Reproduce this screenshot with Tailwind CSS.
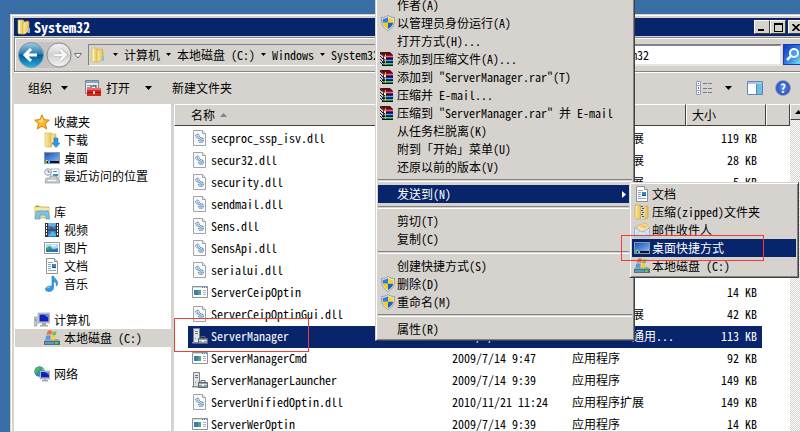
<!DOCTYPE html>
<html lang="zh-CN">
<head>
    <meta charset="UTF-8">
    <meta name="viewport" content="width=device-width, initial-scale=1.0">
    <title>System32</title>
    <script src="https://cdn.jsdelivr.net/npm/@tailwindcss/browser@4"></script>
</head>
<body class="relative flex h-screen overflow-hidden bg-[#396da5] pt-[14px] pl-[10px] font-['Noto_Sans_Mono_CJK_SC','Noto_Sans_CJK_SC','DejaVu_Sans_Mono',monospace] text-[12px] leading-[18px] text-black">

    <!-- Icons -->
    <svg class="absolute size-0">
        <defs>
            <linearGradient id="gFolder" x1="0" x2="1"><stop offset="0" stop-color="#f9ecaa"/><stop offset="1" stop-color="#e3bd50"/></linearGradient>
            <linearGradient id="gBack" x1="0" x2="0" y1="0" y2="1"><stop offset="0" stop-color="#a9c9dc"/><stop offset=".45" stop-color="#2c7fb4"/><stop offset=".5" stop-color="#07578f"/><stop offset="1" stop-color="#1fb4e8"/></linearGradient>
            <linearGradient id="gFwd" x1="0" x2="0" y1="0" y2="1"><stop offset="0" stop-color="#f4f4f4"/><stop offset=".5" stop-color="#d2d2d2"/><stop offset="1" stop-color="#f2f2f2"/></linearGradient>
            <linearGradient id="gScreen" x1="0" x2="1" y1="0" y2="1"><stop offset="0" stop-color="#1c4fb5"/><stop offset="1" stop-color="#7fb4f2"/></linearGradient>
            <linearGradient id="gSearch" x1="0" x2="1" y1="0" y2="1"><stop offset="0" stop-color="#1436c4"/><stop offset=".5" stop-color="#2a7be0"/><stop offset="1" stop-color="#7ff0ff"/></linearGradient>
        </defs>
        <symbol id="folder" viewBox="0 0 16 16">
            <path d="M2 1h5l1 1v13H3l-1-1z" fill="url(#gFolder)" stroke="#d9b750" stroke-width=".6"/>
            <path d="M8 3l4-1 1 1v9l-4 3H7V5z" fill="url(#gFolder)" stroke="#cfa63c" stroke-width=".6"/>
            <path d="M12 9h2v5h-2z" fill="#7cc2e8"/><path d="M3 2h1v12H3z" fill="#fff8cf"/>
        </symbol>
        <symbol id="star" viewBox="0 0 16 16">
            <path d="M8 .8l2.1 4.8 5.2.6-3.9 3.4 1.2 5.3L8 12.2l-4.7 2.7 1.2-5.3L.7 6.2l5.2-.6z" fill="#fdb92c" stroke="#dd7a12" stroke-width="1"/>
            <path d="M8 3l1.2 3.6L8 9 3.5 7l3.2-.6z" fill="#ffe48a"/>
        </symbol>
        <symbol id="downloads" viewBox="0 0 16 16">
            <path d="M1 1h7v14H2l-1-1z" fill="url(#gFolder)" stroke="#d9b750" stroke-width=".6"/>
            <path d="M7 2h5v10H7z" fill="url(#gFolder)" stroke="#d9b750" stroke-width=".6"/>
            <path d="M10 6h4v5h2l-4 4.5L8 11h2z" fill="#2f97e0" stroke="#1b6fb3" stroke-width=".5"/>
        </symbol>
        <symbol id="desktop" viewBox="0 0 16 16">
            <path d="M0 2h16v12H0z" fill="#8c98a8"/><path d="M1 3h14v8H1z" fill="url(#gScreen)"/>
            <path d="M1 11h14v2H1z" fill="#10131c"/><path d="M2 10h2v1H2z" fill="#f2cf2c"/><path d="M4 11h2v2H4z" fill="#55c5f0"/><path d="M1 11h2v2H1z" fill="#4bb54b"/>
        </symbol>
        <symbol id="recent" viewBox="0 0 16 16">
            <path d="M7 1h8v9H7z" fill="#fff" stroke="#9aa3ab" stroke-width=".8"/><path d="M9 3h4v1H9zM9 6h5v2H9z" fill="#3f8bd0"/>
            <circle cx="4" cy="4" r="3.3" fill="#eef1f4" stroke="#98a0a8"/><path d="M4 2v2h2" fill="none" stroke="#4c5a68" stroke-width=".8"/>
            <path d="M2 10h4v-2h7v3h2l1 4H1z" fill="#c5cbd0" stroke="#878f96" stroke-width=".6"/><path d="M4 12h8v1H4z" fill="#fff"/>
        </symbol>
        <symbol id="library" viewBox="0 0 16 16">
            <path d="M1 2h5l1 1h8v11H1z" fill="#f3dc86" stroke="#cfae52" stroke-width=".8"/><path d="M2 2h3v1H2z" fill="#58b858"/>
            <path d="M1 5h14" stroke="#fff6c8"/><path d="M3 7h11l2 8h-4v-4H6v4H1z" fill="#7cc3ee" stroke="#4392c6" stroke-width=".6"/>
        </symbol>
        <symbol id="video" viewBox="0 0 16 16">
            <path d="M1 1h14v14H1z" fill="#30343a"/><path d="M4 1h8v14H4z" fill="#2f7fc4"/>
            <path d="M4 1h8v2L8 6 4 3zM8 9l4 3v2H4z" fill="#53b4ef"/><path d="M5 5l3-1 2 3-3 1zM5 10l2 1-2 1z" fill="#a33f44"/><path d="M4 7.5h8v1H4z" fill="#192d48"/>
            <path d="M2 2h1v2H2zM2 5h1v2H2zM2 8h1v2H2zM2 11h1v2H2zM13 2h1v2h-1zM13 5h1v2h-1zM13 8h1v2h-1zM13 11h1v2h-1z" fill="#fff"/>
        </symbol>
        <symbol id="picture" viewBox="0 0 16 16">
            <path d="M.5 2.5h15v11H.5z" fill="#fff" stroke="#8f969c"/><path d="M2 4h12v8H2z" fill="#a7dcf7"/>
            <path d="M2 8l4-2 3 3 5-1v4H2z" fill="#3f9c6a"/><path d="M2 10l12-1v3H2z" fill="#2476b8"/><path d="M7 5h5v1H7z" fill="#fff"/>
        </symbol>
        <symbol id="document" viewBox="0 0 16 16">
            <path d="M2.5.5h8l3 3v12h-11z" fill="#fff" stroke="#8b929a"/><path d="M10.5.5v3h3" fill="#dfe6ec" stroke="#8b929a"/>
            <path d="M4 4h5v1H4zM4 6h3v1H4zM4 8h3v1H4zM4 10h3v1H4zM4 12h8v1H4z" fill="#8aa6c0"/><path d="M8 6h4v4H8z" fill="#2f8bc9"/><path d="M8 9h4v1H8z" fill="#1e4e86"/>
        </symbol>
        <symbol id="music" viewBox="0 0 16 16">
            <path d="M8 0h1.5c.5 3 5 3.5 4 8.5-.5 1-1 1.5-1.5 1.5 1-3-.5-4-2.500-4.5V12c0 2-2 3.5-4.500 3.5S1.500 14.300 1.500 13 3.500 10 6 10c1 0 1.500.2 2 .4z" fill="#2f9de6" stroke="#1f74b4" stroke-width=".6"/>
            <path d="M3 12c1-1 2-1 3-1" stroke="#b8e4ff" fill="none"/>
        </symbol>
        <symbol id="computer" viewBox="0 0 16 16">
            <path d="M0 5h3v9H0z" fill="#c6cbd0" stroke="#868c92" stroke-width=".6"/><path d="M1 7h1v2H1z" fill="#3dbb4e"/>
            <path d="M4 1h12v10H4z" fill="#c8cdd2" stroke="#8c9298" stroke-width=".6"/><path d="M5.500 2.500h9v7h-9z" fill="#0d22b8"/><path d="M10 2.500h4.500V6z" fill="#6d86ef"/>
            <path d="M8 11h4v2h2v1.500H6V13h2z" fill="#a3a9af"/>
        </symbol>
        <symbol id="drive" viewBox="0 0 16 16">
            <path d="M2 9h12l2 2v4H0v-4z" fill="#9aa4ad"/><path d="M0 11h16v4H0z" fill="#55707c"/><path d="M1 12h9v2H1z" fill="#4d9fc4"/><path d="M11 12h3v2h-3z" fill="#43d84a"/>
            <path d="M3.500 1.500c2-2 3-1 4.500-.5L7 5C5.500 4 4 4.300 2.500 5z" fill="#ef6a32"/><path d="M8.700 1.300c1.500.7 2.800.5 4 0l-1 3.700c-1.200.6-2.500.4-3.700 0z" fill="#76bf3f"/>
            <path d="M2.300 5.800c1.500-.7 3-.7 4.500 0L6 10C4.500 9 3.200 9 1.300 9.800z" fill="#4f9be8"/><path d="M7.700 5.800c1.200.7 2.700.5 3.800 0l-1 4.200c-1.200.5-2.500.4-3.700-.2z" fill="#fbc932"/>
        </symbol>
        <symbol id="network" viewBox="0 0 16 16">
            <circle cx="5.500" cy="5.500" r="5.200" fill="#2f86d4"/><path d="M2 2c2-1.500 4-1.500 5-1L6 4 4 5 3 8 .7 6z" fill="#4fba45"/><path d="M7 3l3-1 .5 3z" fill="#7ed66e"/>
            <path d="M6 5h10v8H6z" fill="#c8cdd2" stroke="#8c9298" stroke-width=".6"/><path d="M7 6h8v5.500H7z" fill="#0d22b8"/><path d="M11 6h4v3z" fill="#6d86ef"/><path d="M10 13h2v1h2v1.500H8V14h2z" fill="#a3a9af"/>
        </symbol>
        <symbol id="dll" viewBox="0 0 16 16">
            <path d="M1.500.5h9l3 3v12h-12z" fill="#fbfbfb" stroke="#a3a3a3"/><path d="M10.500.5v3h3" fill="#e8e8e8" stroke="#a3a3a3"/>
            <circle cx="5.500" cy="6" r="1.900" fill="#dcebfa" stroke="#3f78b4" stroke-dasharray="1.200 .6"/><circle cx="9" cy="10" r="2.300" fill="#dcebfa" stroke="#3f78b4" stroke-width="1.200" stroke-dasharray="1.200 .6"/>
            <circle cx="5.500" cy="6" r=".6" fill="#3f78b4"/><circle cx="9" cy="10" r=".8" fill="#3f78b4"/>
        </symbol>
        <symbol id="exe" viewBox="0 0 16 16">
            <path d="M.5 2.500h15v11H.5z" fill="#fff" stroke="#8e9297"/><path d="M1 3h14v1H1z" fill="#d3dbe3"/><path d="M10 3h1v1h-1zM12 3h1v1h-1zM14 3h1v1h-1z" fill="#4a84c8"/>
            <path d="M2 6h7v5H2z" fill="#4fa57c"/><path d="M2 6h4v5H2z" fill="#3b7cb4"/><path d="M11 6h3v1h-3zM11 8h3v1h-3zM11 10h3v1h-3z" fill="#aab0b6"/>
        </symbol>
        <symbol id="server" viewBox="0 0 16 16">
            <path d="M1.500.5h6v14h-6z" fill="#dfe3e6" stroke="#7d848a"/><path d="M3 3h3v1H3zM3 5h3v1H3z" fill="#6f777e"/><path d="M3 10h1v1H3z" fill="#4fba45"/><path d="M0 14h9v1.500H0z" fill="#8b9298"/>
            <path d="M6.500 10.500h9v5h-9z" fill="#8fa0ac" stroke="#5c6972"/><path d="M9 10V8.500h4V10" fill="none" stroke="#5c6972"/><path d="M7 12h8v1H7z" fill="#d6dee4"/><path d="M10 12h2v2h-2z" fill="#f2f4f6"/>
        </symbol>
        <symbol id="shield" viewBox="0 0 16 16">
            <path d="M8 .5c2 1.400 4 2 6.500 2 .6 6-1.500 10.500-6.500 13C3 13 .9 8.500 1.500 2.500 4 2.500 6 1.900 8 .5z" fill="#e6e9ec" stroke="#8d9499" stroke-width=".9"/>
            <path d="M8 2.200v5.600H2.800c-.2-1.300-.2-2.600-.1-4C4.800 3.700 6.500 3 8 2.200z" fill="#2c7fdc"/><path d="M8 2.200c1.500.8 3.200 1.500 5.300 1.600.1 1.400.1 2.700-.1 4H8z" fill="#fbd12e"/>
            <path d="M2.800 7.800H8v6.300c-3-1.500-4.600-3.600-5.200-6.300z" fill="#fbc81e"/><path d="M8 7.800h5.200c-.6 2.700-2.200 4.800-5.200 6.300z" fill="#1c62c0"/>
        </symbol>
        <symbol id="rar" viewBox="0 0 16 16">
            <path d="M0 1h10l3 3H3z" fill="#5c0d10"/><path d="M0 1l3 3v1L0 3z" fill="#2c0406"/>
            <path d="M3 4h10v3H3z" fill="#8c1d3c"/><path d="M4 5h9v1H4z" fill="#ef5fa4"/><path d="M2 7h11v1H2z" fill="#111"/>
            <path d="M3 8h10v3H3z" fill="#1b2f9a"/><path d="M4 9h9v1H4z" fill="#5aa0f0"/><path d="M2 11h11v1H2z" fill="#111"/>
            <path d="M3 12h10v2H3z" fill="#0e8a5e"/><path d="M4 12h9v1H4z" fill="#35dba2"/><path d="M2 14h11v1H2z" fill="#111"/>
            <path d="M0 5h1v1H0zM1 6h1v1H1zM0 8h1v1H0zM1 9h1v1H1zM2 10h1v1H2zM0 11h1v1H0zM1 12h1v1H1zM2 13h1v1H2z" fill="#222"/><path d="M5 3h1v11H5z" fill="#c9b44a"/><path d="M4 6h2v2H4z" fill="#fff3a0"/>
        </symbol>
        <symbol id="zip" viewBox="0 0 16 16">
            <path d="M1 1h6v14H2l-1-1z" fill="url(#gFolder)" stroke="#cfa63c" stroke-width=".7"/><path d="M7 2h7v12l-3 1H7z" fill="url(#gFolder)" stroke="#cfa63c" stroke-width=".7"/>
            <path d="M7 1h3v14H7z" fill="#d6d9dc"/><path d="M7 2h2v1H7zM8 4h2v1H8zM7 6h2v1H7zM8 8h2v1H8zM7 10h2v1H7zM8 12h2v1H8z" fill="#4a5158"/>
        </symbol>
        <symbol id="mail" viewBox="0 0 16 16">
            <path d="M3 4l9-3 3 5-2 7H3z" fill="#fbe2a0" stroke="#e2a350" stroke-width=".7"/><path d="M5 5l6-2 2 3z" fill="#f7b65a"/>
            <path d="M.5 5.500L8 10l7.500-4v9H.5z" fill="#cfe8f8" stroke="#86b2d0" stroke-width=".8"/><path d="M.5 15L6 9M15.500 15L10 9" stroke="#9cc4de" stroke-width=".8"/>
        </symbol>
        <symbol id="toolbox" viewBox="0 0 16 16">
            <path d="M.5.5h13v13H.5z" fill="#e9edf1" stroke="#75869a"/><path d="M1 1h12v2H1z" fill="#8fa5c4"/><path d="M2 5h4v1H2zM2 7h3v1H2zM8 5h4v1H8z" fill="#8896a6"/>
            <path d="M6 8V6h5v2" fill="none" stroke="#39404a"/><path d="M2 8h14v8H2z" fill="#d8261c"/><path d="M2 8h14v2H2z" fill="#f0695c"/><path d="M2 12h14v1H2z" fill="#8c130d"/><path d="M8 11h2v3H8z" fill="#f3d9d6"/>
        </symbol>
    </svg>

    <!-- Explorer window -->
    <main class="flex w-[calc(100%+10px)] shrink-0 flex-col border border-[#d6d3ce] bg-[#d6d3ce] px-[3px] pt-[3px] shadow-[inset_1px_1px_0_#fff]">
        <header class="flex h-[18px] shrink-0 items-center bg-[#08246b] pr-0.5 pl-[2px] text-white">
            <svg class="size-4"><use href="#folder"/></svg>
            <h1 class="ml-0.5 flex-1 text-[14px] font-bold">System32</h1>
            <button aria-label="最小化" class="flex h-[14px] w-4 items-end border border-white border-r-[#404040] border-b-[#404040] bg-[#d6d3ce] pb-0.5 pl-[3px]"><span class="h-0.5 w-1.5 bg-black"></span></button>
            <button aria-label="最大化" class="flex h-[14px] w-4 items-center justify-center border border-white border-r-[#404040] border-b-[#404040] bg-[#d6d3ce]"><span class="h-[9px] w-[9px] border border-t-2 border-black"></span></button>
            <button aria-label="关闭" class="ml-0.5 flex h-[14px] w-4 items-center justify-center border border-white border-r-[#404040] border-b-[#404040] bg-[#d6d3ce]">
                <svg class="h-[7px] w-2" viewBox="0 0 8 7"><path d="M.5 0L7.500 7M7.500 0L.5 7" stroke="#000" stroke-width="1.600"/></svg>
            </button>
        </header>

        <!-- Address bar -->
        <div class="mt-px flex h-[35px] shrink-0 items-center border border-[#848284] pr-0.5 pl-[3px] shadow-[inset_1px_1px_0_#fff,0_1px_0_#fff]">
            <svg class="h-7 w-[66px]" viewBox="0 0 66 28">
                <path d="M14 1h30c3 0 5 2 8 5s3 13 0 16-5 5-8 5H14z" fill="#c3c3c3"/>
                <circle cx="13" cy="14" r="12.500" fill="url(#gBack)" stroke="#7f98a8"/>
                <path d="M13 8l-6 6 6 6M7.500 14H19" fill="none" stroke="#fff" stroke-width="3"/>
                <circle cx="41" cy="14" r="12" fill="url(#gFwd)" stroke="#8f8f8f"/>
                <path d="M42 8.500l5.500 5.500-5.500 5.500M47 14H36" fill="none" stroke="#b8b8b8" stroke-width="4"/>
                <path d="M42 8.500l5.500 5.500-5.500 5.500M47 14H36" fill="none" stroke="#f8f8f8" stroke-width="2.500"/>
                <path d="M56.500 12.500h7L60 17z" fill="#fff" stroke="#6b6f80"/>
            </svg>
            <nav class="ml-1 flex h-[22px] flex-1 items-center border border-[#848284] border-r-white border-b-white pl-px">
                <svg class="size-4"><use href="#folder"/></svg>
                <svg class="mr-[6px] ml-[7px] h-[3px] w-[5px]"><path d="M0 0h5L2.500 3z"/></svg>
                <a href="#">计算机</a>
                <svg class="mx-[6px] h-[3px] w-[5px]"><path d="M0 0h5L2.500 3z"/></svg>
                <a href="#">本地磁盘 (C:)</a>
                <svg class="mx-[6px] h-[3px] w-[5px]"><path d="M0 0h5L2.500 3z"/></svg>
                <a href="#">Windows</a>
                <svg class="mx-[6px] h-[3px] w-[5px]"><path d="M0 0h5L2.500 3z"/></svg>
                <a href="#">System32</a>
            </nav>
            <input aria-label="搜索" value="搜索 System32" class="ml-1 h-[22px] w-[219px] border-2 border-[#848284] border-r-[#e8e6e2] border-b-[#e8e6e2] bg-white pl-1.5 outline-0">
            <button aria-label="开始搜索" class="ml-px flex h-[21px] w-5 items-center justify-center border border-[#1c3aa8]">
                <svg class="size-full" viewBox="0 0 18 19"><path d="M0 0h18v19H0z" fill="url(#gSearch)"/><circle cx="10" cy="8" r="4" fill="#4f9cf0" stroke="#fff" stroke-width="2"/><path d="M7 11l-4 4" stroke="#fff" stroke-width="2.500"/></svg>
            </button>
        </div>

        <!-- Toolbar -->
        <div class="flex h-[32px] shrink-0 items-center pr-[15px] pl-[14px]">
            <button class="flex items-center gap-[9px]">组织 <svg class="h-1 w-[7px]"><path d="M0 0h7L3.500 4z"/></svg></button>
            <button class="ml-[17px] flex items-center gap-[5px]"><svg class="size-4"><use href="#toolbox"/></svg>打开</button>
            <button aria-label="打开选项" class="ml-[15px]"><svg class="h-1 w-[7px]"><path d="M0 0h7L3.500 4z"/></svg></button>
            <button class="ml-5">新建文件夹</button>
            <span class="flex-1"></span>
            <button aria-label="更改视图">
                <svg class="h-[14px] w-4" viewBox="0 0 16 14"><path d="M.5.5h4v13h-4zM.5 4.500h4M.5 9.500h4" fill="#fff" stroke="#8ba3bf"/><path d="M2 2h1v1H2zM2 11h1v1H2z" fill="#2c62c8"/><path d="M2 6h1v2H2z" fill="#e03030"/><path d="M7 2.500h4M12 2.500h4M7 7.500h4M12 7.500h4M7 11.500h4M12 11.500h4" stroke="#6d7f93"/></svg>
            </button>
            <button aria-label="视图选项" class="ml-[13px]"><svg class="h-1 w-[7px]"><path d="M0 0h7L3.500 4z"/></svg></button>
            <button aria-label="预览窗格" class="ml-[15px]">
                <svg class="h-[14px] w-4" viewBox="0 0 16 14"><path d="M.5.5h15v13H.5z" fill="#fff" stroke="#5f86b4"/><path d="M1 1h14v2H1z" fill="#a9c6e6"/><path d="M10 3h5v10h-5z" fill="#6cc0e4"/><path d="M9.500 3v10" stroke="#5f86b4"/></svg>
            </button>
            <button aria-label="帮助" class="ml-3 flex size-4 items-center justify-center rounded-full border border-[#8d9cc0] bg-radial from-[#5b8cf0] to-[#1c3fa6] font-bold text-white">?</button>
        </div>

        <div class="flex min-h-0 flex-1">
            <!-- Navigation pane -->
            <nav class="flex w-[157px] shrink-0 flex-col gap-[18px] bg-white pt-[9px]">
                <ul>
                    <li><a href="#" class="flex items-center gap-1 pl-5"><svg class="size-4"><use href="#star"/></svg>收藏夹</a></li>
                    <li><a href="#" class="flex items-center gap-1 pl-[30px]"><svg class="size-4"><use href="#downloads"/></svg>下载</a></li>
                    <li><a href="#" class="flex items-center gap-1 pl-[30px]"><svg class="size-4"><use href="#desktop"/></svg>桌面</a></li>
                    <li><a href="#" class="flex items-center gap-1 pl-[30px]"><svg class="size-4"><use href="#recent"/></svg>最近访问的位置</a></li>
                </ul>
                <ul>
                    <li><a href="#" class="flex items-center gap-1 pl-5"><svg class="size-4"><use href="#library"/></svg>库</a></li>
                    <li><a href="#" class="flex items-center gap-1 pl-[30px]"><svg class="size-4"><use href="#video"/></svg>视频</a></li>
                    <li><a href="#" class="flex items-center gap-1 pl-[30px]"><svg class="size-4"><use href="#picture"/></svg>图片</a></li>
                    <li><a href="#" class="flex items-center gap-1 pl-[30px]"><svg class="size-4"><use href="#document"/></svg>文档</a></li>
                    <li><a href="#" class="flex items-center gap-1 pl-[30px]"><svg class="size-4"><use href="#music"/></svg>音乐</a></li>
                </ul>
                <ul>
                    <li><a href="#" class="flex items-center gap-1 pl-5"><svg class="size-4"><use href="#computer"/></svg>计算机</a></li>
                    <li><a href="#" class="ml-px flex items-center gap-1 bg-[#d6d3ce] pl-[29px]"><svg class="size-4"><use href="#drive"/></svg>本地磁盘 (C:)</a></li>
                </ul>
                <ul>
                    <li><a href="#" class="flex items-center gap-1 pl-5"><svg class="size-4"><use href="#network"/></svg>网络</a></li>
                </ul>
            </nav>

            <!-- File list -->
            <section class="ml-[3px] min-w-0 flex-1 overflow-hidden bg-white">
                <table class="w-full table-fixed border-separate border-spacing-0 whitespace-nowrap">
                    <thead>
                        <tr class="h-[22px] bg-[#d6d3ce] text-left">
                            <th class="border border-white border-r-[#424142] border-b-[#424142] p-0 pl-4 font-normal"><span class="flex items-center gap-[5px]">名称 <svg class="h-1 w-[7px]"><path d="M0 4h7L3.500 0z" fill="#848284"/></svg></span></th>
                            <th class="w-[120px] border border-white border-r-[#424142] border-b-[#424142] p-0 pl-[5px] font-normal">修改日期</th>
                            <th class="w-[120px] border border-white border-r-[#424142] border-b-[#424142] p-0 pl-[5px] font-normal">类型</th>
                            <th class="w-[80px] border border-white border-r-[#424142] border-b-[#424142] p-0 pl-[5px] font-normal">大小</th>
                            <th class="w-[24px] border border-white border-r-[#424142] border-b-[#424142] p-0"></th>
                        </tr>
                    </thead>
                    <tbody id="fileList">
                        <tr class="h-0.5"><td colspan="5" class="p-0"></td></tr>
                    </tbody>
                </table>
            </section>

            <!-- Scrollbar -->
            <div class="w-4 shrink-0 bg-[repeating-conic-gradient(#d6d3ce_0_25%,#fff_0_50%)] bg-size-[2px_2px]">
                <button aria-label="向上滚动" class="flex size-4 items-center justify-center border border-white border-r-[#424142] border-b-[#424142] bg-[#d6d3ce]"><svg class="h-1 w-[7px]"><path d="M0 4h7L3.500 0z"/></svg></button>
            </div>
        </div>
    </main>

    <!-- Context menu -->
    <div role="menu" class="absolute -top-[7px] left-[375px] w-[260px] border border-[#d6d3ce] border-r-[#424142] border-b-[#424142] bg-[#d6d3ce] p-0.5 shadow-[inset_1px_1px_0_#fff,inset_-1px_-1px_0_#848284]">
        <button role="menuitem" class="flex w-full items-center pl-[19px]">作者(A)</button>
        <button role="menuitem" class="flex w-full items-center gap-px pl-0.5"><svg class="size-4"><use href="#shield"/></svg>以管理员身份运行(A)</button>
        <button role="menuitem" class="flex w-full items-center pl-[19px]">打开方式(H)...</button>
        <button role="menuitem" class="flex w-full items-center gap-px pl-0.5"><svg class="size-4"><use href="#rar"/></svg>添加到压缩文件(A)...</button>
        <button role="menuitem" class="flex w-full items-center gap-px pl-0.5"><svg class="size-4"><use href="#rar"/></svg>添加到 "ServerManager.rar"(T)</button>
        <button role="menuitem" class="flex w-full items-center gap-px pl-0.5"><svg class="size-4"><use href="#rar"/></svg>压缩并 E-mail...</button>
        <button role="menuitem" class="flex w-full items-center gap-px pl-0.5"><svg class="size-4"><use href="#rar"/></svg>压缩到 "ServerManager.rar" 并 E-mail</button>
        <button role="menuitem" class="flex w-full items-center pl-[19px]">从任务栏脱离(K)</button>
        <button role="menuitem" class="flex w-full items-center pl-[19px]">附到「开始」菜单(U)</button>
        <button role="menuitem" class="flex w-full items-center pl-[19px]">还原以前的版本(V)</button>
        <hr class="my-[3px] h-[3px] border-t border-b border-t-[#848284] border-b-white">
        <button role="menuitem" class="flex w-full items-center justify-between bg-[#08246b] pr-1.5 pl-[19px] text-white">发送到(N)<svg class="h-[7px] w-1"><path d="M0 0v7L4 3.500z" fill="#fff"/></svg></button>
        <hr class="my-[3px] h-[3px] border-t border-b border-t-[#848284] border-b-white">
        <button role="menuitem" class="flex w-full items-center pl-[19px]">剪切(T)</button>
        <button role="menuitem" class="flex w-full items-center pl-[19px]">复制(C)</button>
        <hr class="my-[3px] h-[3px] border-t border-b border-t-[#848284] border-b-white">
        <button role="menuitem" class="flex w-full items-center pl-[19px]">创建快捷方式(S)</button>
        <button role="menuitem" class="flex w-full items-center gap-px pl-0.5"><svg class="size-4"><use href="#shield"/></svg>删除(D)</button>
        <button role="menuitem" class="flex w-full items-center gap-px pl-0.5"><svg class="size-4"><use href="#shield"/></svg>重命名(M)</button>
        <hr class="my-[3px] h-[3px] border-t border-b border-t-[#848284] border-b-white">
        <button role="menuitem" class="flex w-full items-center pl-[19px]">属性(R)</button>
    </div>

    <!-- Send-to submenu -->
    <div role="menu" class="absolute top-[182px] left-[629px] w-[170px] border border-[#d6d3ce] border-r-[#424142] border-b-[#424142] bg-[#d6d3ce] p-0.5 shadow-[inset_1px_1px_0_#fff,inset_-1px_-1px_0_#848284]">
        <button role="menuitem" class="flex w-full items-center gap-0.5 pl-0.5"><svg class="size-4"><use href="#document"/></svg>文档</button>
        <button role="menuitem" class="flex w-full items-center gap-0.5 pl-0.5"><svg class="size-4"><use href="#zip"/></svg>压缩(zipped)文件夹</button>
        <button role="menuitem" class="flex w-full items-center gap-0.5 pl-0.5"><svg class="size-4"><use href="#mail"/></svg>邮件收件人</button>
        <button role="menuitem" class="flex w-full items-center gap-0.5 bg-[#08246b] pl-0.5 text-white"><svg class="size-4"><use href="#desktop"/></svg>桌面快捷方式</button>
        <button role="menuitem" class="flex w-full items-center gap-0.5 pl-0.5"><svg class="size-4"><use href="#drive"/></svg>本地磁盘 (C:)</button>
    </div>

    <!-- Highlight boxes -->
    <div class="pointer-events-none absolute top-[318px] left-[174px] h-[34px] w-[135px] border border-[#f23c3c]"></div>
    <div class="pointer-events-none absolute top-[235px] left-[621px] h-[26px] w-[143px] border border-[#f23c3c]"></div>

    <script>
// Files shown in the list
const files = [
    { icon: 'dll', name: 'secproc_ssp_isv.dll', date: '2010/11/21 11:24', type: '应用程序扩展', size: '119 KB' },
    { icon: 'dll', name: 'secur32.dll', date: '2010/11/21 11:24', type: '应用程序扩展', size: '28 KB' },
    { icon: 'dll', name: 'security.dll', date: '2009/7/14 9:41', type: '应用程序扩展', size: '5 KB' },
    { icon: 'dll', name: 'sendmail.dll', date: '2009/7/14 9:41', type: '应用程序扩展', size: '' },
    { icon: 'dll', name: 'Sens.dll', date: '2009/7/14 9:41', type: '应用程序扩展', size: '' },
    { icon: 'dll', name: 'SensApi.dll', date: '2009/7/14 9:41', type: '应用程序扩展', size: '' },
    { icon: 'dll', name: 'serialui.dll', date: '2009/7/14 9:41', type: '应用程序扩展', size: '' },
    { icon: 'exe', name: 'ServerCeipOptin', date: '2009/7/14 9:39', type: '应用程序', size: '14 KB' },
    { icon: 'dll', name: 'ServerCeipOptinGui.dll', date: '2009/7/14 9:41', type: '应用程序扩展', size: '42 KB' },
    { icon: 'server', name: 'ServerManager', date: '2009/7/14 9:39', type: 'Microsoft 通用...', size: '113 KB', selected: true },
    { icon: 'exe', name: 'ServerManagerCmd', date: '2009/7/14 9:47', type: '应用程序', size: '92 KB' },
    { icon: 'server', name: 'ServerManagerLauncher', date: '2009/7/14 9:39', type: '应用程序', size: '149 KB' },
    { icon: 'dll', name: 'ServerUnifiedOptin.dll', date: '2010/11/21 11:24', type: '应用程序扩展', size: '149 KB' },
    { icon: 'exe', name: 'ServerWerOptin', date: '2009/7/14 9:39', type: '应用程序', size: '14 KB' }
];

const fileList = document.getElementById('fileList');

files.forEach(file => {
    const mark = file.selected ? 'bg-[#08246b] text-white' : '';
    const row = document.createElement('tr');
    row.innerHTML = `
        <td class="p-0 pl-[14px]"><div class="flex h-[22px] items-center gap-[3px] pb-0.5 pl-1 ${mark}"><svg class="size-4"><use href="#${file.icon}"/></svg>${file.name}</div></td>
        <td class="p-0"><div class="flex h-[22px] items-center pb-0.5 pl-1.5 ${mark}">${file.date}</div></td>
        <td class="p-0"><div class="flex h-[22px] items-center pb-0.5 pl-1.5 ${mark}">${file.type}</div></td>
        <td class="p-0 pr-1"><div class="flex h-[22px] items-center justify-end pr-[5px] pb-0.5 ${mark}">${file.size}</div></td>
        <td class="p-0"></td>`;
    fileList.appendChild(row);
});
    </script>
</body>
</html>
